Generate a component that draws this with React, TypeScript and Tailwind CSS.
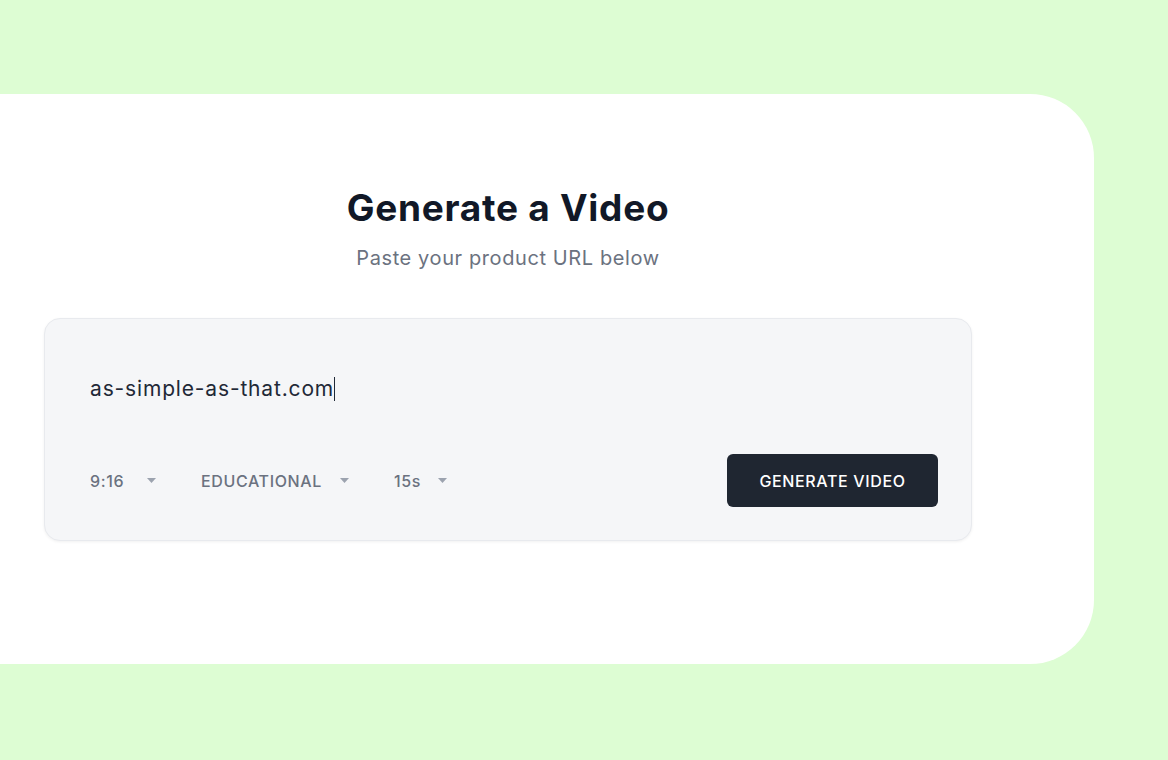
export default function App() {
  const options = [
    { label: "9:16", width: "w-[57px]" },
    { label: "EDUCATIONAL", width: "w-[139px]" },
    { label: "15s", width: "w-[44px]" },
  ]

  return (
    <div className="h-[760px] overflow-hidden bg-[#ddfdd3] pt-[94px] font-['Inter',sans-serif]">
      <div className="ml-[-78px] flex h-[570px] w-[1172px] flex-col items-center rounded-[64px] bg-white pt-[92px]">
        <h1 className="text-[37px] leading-[44px] font-bold tracking-[0.02em] text-[#111827]">Generate a Video</h1>
        <p className="mt-[14px] text-[20px] leading-[28px] tracking-[0.03em] text-[#6b7280]">Paste your product URL below</p>

        <div className="mt-[46px] w-[928px] rounded-2xl border border-[#e8eaee] bg-[#f5f6f8] pt-[56px] pr-[33px] pb-[33px] pl-[45px] shadow-[0_1px_3px_rgba(0,0,0,0.06)]">
          <div className="flex h-[28px] items-center text-[21px] tracking-[0.04em] text-[#1f2937]">
            <span>as-simple-as-that.com</span>
            <span className="h-[24px] w-px bg-[#1f2937]" />
          </div>

          <div className="mt-[51px] flex items-center justify-between">
            <div className="flex items-center gap-[45px] text-[16px] font-medium tracking-[0.04em] text-[#6b7280]">
              {options.map((opt) => (
                <div key={opt.label} className="flex items-center">
                  <span className={opt.width}>{opt.label}</span>
                  <svg width="9" height="5" viewBox="0 0 9 5" className="text-[#9ca3af]">
                    <path d="M0 0h9L4.5 5z" fill="currentColor" />
                  </svg>
                </div>
              ))}
            </div>

            <button className="h-[53px] w-[211px] rounded-md bg-[#1f2631] text-[16px] font-medium tracking-[0.04em] text-white">
              GENERATE VIDEO
            </button>
          </div>
        </div>
      </div>
    </div>
  )
}
